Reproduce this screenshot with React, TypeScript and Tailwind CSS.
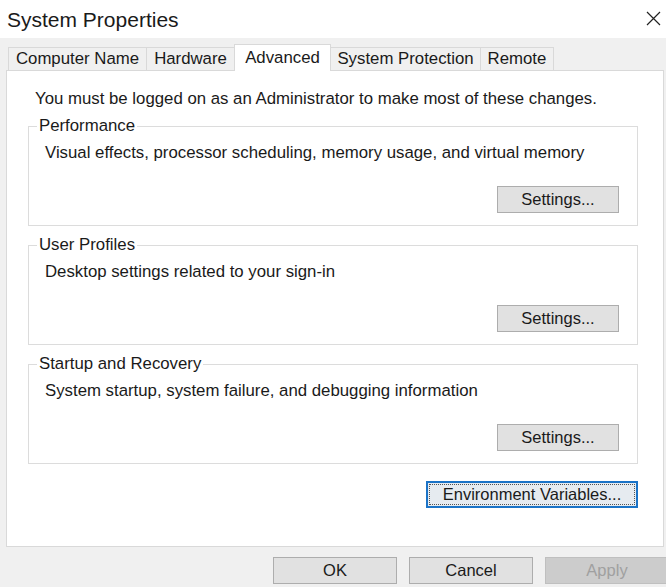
import React from "react";

function Btn({ children, className = "" }: { children: React.ReactNode; className?: string }) {
  return (
    <button
      className={`h-[27px] w-[122px] border border-[#adadad] bg-[#e1e1e1] text-[16.5px] text-[#1a1a1a] leading-none flex items-center justify-center ${className}`}
    >
      {children}
    </button>
  );
}

function Group({ title, desc }: { title: string; desc: string }) {
  return (
    <div className="relative h-[100px] border border-[#dcdcdc] flex flex-col">
      <span className="absolute -top-[11px] left-[8px] bg-white px-[2px] text-[16.8px] leading-[20px] text-[#1a1a1a]">
        {title}
      </span>
      <div className="pl-[16px] pt-[16px] text-[16.8px] leading-[20px] text-[#1a1a1a]">{desc}</div>
      <div className="mt-auto mb-[12px] mr-[18px] flex justify-end">
        <Btn>Settings...</Btn>
      </div>
    </div>
  );
}

export default function App() {
  const tabs = [
    { name: "Computer Name", w: "w-[139px]" },
    { name: "Hardware", w: "w-[89px]" },
    { name: "Advanced", w: "w-[97px]", active: true },
    { name: "System Protection", w: "w-[151px]" },
    { name: "Remote", w: "w-[74px]" },
  ];
  return (
    <div
      className="w-[666px] h-[587px] overflow-hidden bg-[#f0f0f0] flex flex-col"
      style={{ fontFamily: '"Liberation Sans", Arial, sans-serif' }}
    >
      <div className="h-[38px] bg-white flex items-center justify-between pl-[7px] pr-[5px] shrink-0">
        <span className="text-[21px] text-[#1a1a1a] leading-none">System Properties</span>
        <svg width="15" height="15" viewBox="0 0 15 15" className="-mt-[2px]">
          <path d="M1 1 L14 14 M14 1 L1 14" stroke="#222" strokeWidth="1.2" fill="none" />
        </svg>
      </div>
      <div className="pl-[8px] pt-[6px] flex items-end shrink-0 relative z-10">
        {tabs.map((t) =>
          t.active ? (
            <div
              key={t.name}
              className={`${t.w} h-[27px] -mr-px bg-white border border-b-0 border-[#d9d9d9] flex items-center justify-center text-[16.8px] text-[#1a1a1a] -mb-px`}
            >
              {t.name}
            </div>
          ) : (
            <div
              key={t.name}
              className={`${t.w} h-[23px] -mr-px bg-[#f0f0f0] border border-b-0 border-[#d9d9d9] flex items-center justify-center text-[16.8px] text-[#1a1a1a]`}
            >
              {t.name}
            </div>
          )
        )}
      </div>
      <div className="ml-[6px] w-[658px] h-[477px] bg-white border border-[#d9d9d9] flex flex-col pl-[21px] pr-[25px] shrink-0">
        <div className="pt-[18px] pl-[7px] text-[16.8px] leading-[20px] text-[#1a1a1a]">
          You must be logged on as an Administrator to make most of these changes.
        </div>
        <div className="mt-[17px] flex flex-col gap-[19px]">
          <Group title="Performance" desc="Visual effects, processor scheduling, memory usage, and virtual memory" />
          <Group title="User Profiles" desc="Desktop settings related to your sign-in" />
          <Group title="Startup and Recovery" desc="System startup, system failure, and debugging information" />
        </div>
        <div className="mt-[17px] flex justify-end">
          <button className="h-[27px] w-[212px] border-2 border-[#1a73c7] bg-[#e6ebf0] p-[1px] text-[16.5px] text-[#1a1a1a]">
            <span className="flex h-full w-full items-center justify-center border border-dotted border-[#555]">
              Environment Variables...
            </span>
          </button>
        </div>
      </div>
      <div className="flex pl-[273px] pt-[10px] gap-[12px]">
        <Btn className="w-[124px] shrink-0">OK</Btn>
        <Btn className="w-[124px] shrink-0">Cancel</Btn>
        <button className="h-[27px] w-[124px] shrink-0 border border-[#bfbfbf] bg-[#cccccc] text-[16.5px] text-[#a0a0a0] flex items-center justify-center">
          Apply
        </button>
      </div>
    </div>
  );
}
